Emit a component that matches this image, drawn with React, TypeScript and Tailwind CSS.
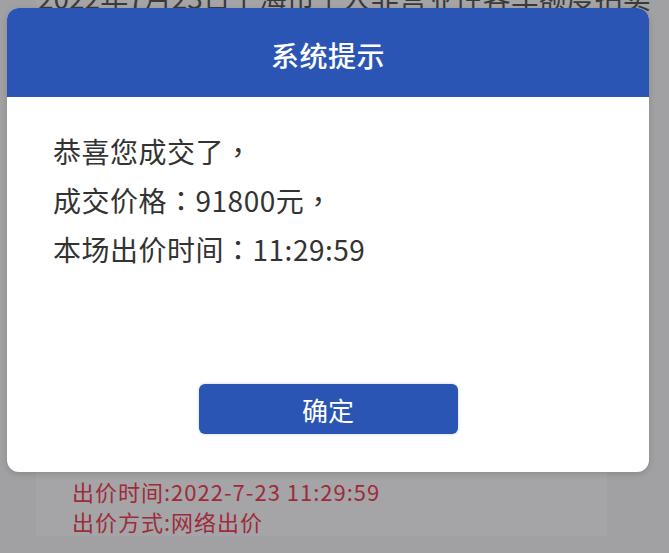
const Punct = ({ children }: { children: string }) => (
  <span style={{ fontFamily: '"Noto Sans CJK TC", sans-serif' }}>{children}</span>
);

const App = () => {
  return (
    <div
      className="relative h-[553px] w-[669px] overflow-hidden bg-[#a1a1a3]"
      style={{ fontFamily: '"Noto Sans CJK SC", "Noto Sans", sans-serif' }}
    >
      {/* page behind the dialog */}
      <div className="ml-[36px] mr-[62px] h-full bg-[#a5a5a7]">
        <p className="-mt-[17px] pl-[2px] whitespace-nowrap text-[28px] leading-[28px] text-[#3a3a3c]">
          2022年7月23日上海市个人非营业性客车额度拍卖
        </p>
        <div className="mt-[465px] pl-[36px] text-[22px] leading-[30px] tracking-[1px] text-[#9e2b3b]">
          <p>出价时间:2022-7-23 11:29:59</p>
          <p>出价方式:网络出价</p>
        </div>
      </div>

      {/* system dialog */}
      <div className="absolute left-[7px] top-[8px] flex h-[464px] w-[642px] flex-col overflow-hidden rounded-[12px] bg-white shadow-[0_2px_6px_rgba(0,0,0,0.15)]">
        <div className="flex h-[89px] items-center justify-center bg-[#2b55b4] pt-[5px]">
          <h2 className="text-[28px] font-medium tracking-[0.5px] text-white">系统提示</h2>
        </div>
        <div className="flex flex-1 flex-col px-[46px] pt-[30px]">
          <div className="text-[28px] leading-[49px] tracking-[0.5px] text-[#333333]">
            <p>恭喜您成交了<Punct>，</Punct></p>
            <p>成交价格<Punct>：</Punct>91800元<Punct>，</Punct></p>
            <p>本场出价时间<Punct>：</Punct>11:29:59</p>
          </div>
          <div className="mt-auto mb-[38px] flex justify-center">
            <button className="h-[50px] w-[259px] rounded-[6px] bg-[#2b55b4] text-[26px] text-white shadow-[0_0_3px_rgba(43,85,180,0.3)]">
              确定
            </button>
          </div>
        </div>
      </div>
    </div>
  );
};

export default App;
